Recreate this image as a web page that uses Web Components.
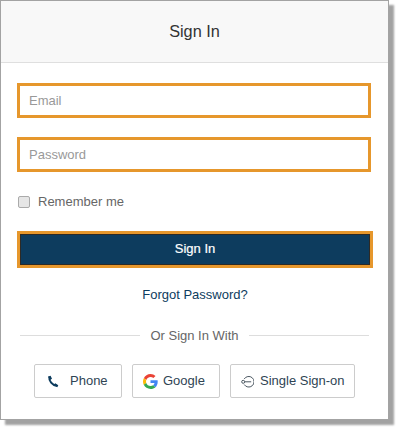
<!DOCTYPE html>
<html>
<head>
<meta charset="utf-8">
<title>Sign In</title>
<style>
  html, body { margin: 0; padding: 0; background: #fff; }
  body { font-family: "Liberation Sans", Arial, sans-serif; width: 400px; height: 431px; overflow: hidden; }
</style>
</head>
<body>
<login-card>
  <span slot="title">Sign In</span>
  <text-field label="Email"></text-field>
  <text-field label="Password" style="margin-top:19px"></text-field>
  <remember-check>Remember me</remember-check>
  <submit-button>Sign In</submit-button>
  <forgot-link>Forgot Password?</forgot-link>
  <or-divider>Or Sign In With</or-divider>
  <provider-row>
    <provider-button style="width:88px;padding-left:12px" gap="11">
      <svg slot="icon" width="12" height="13" viewBox="0 0 12 13" fill="none"><path d="M2.300 1.800C1.900 6 5 10.300 10 11" stroke="#0d3c5e" stroke-width="2"/><path d="M1 1.600 3.600 .8 5 3.800 3 5zM6.800 9.500 8.300 8.200 11.300 10.200 10.300 12.300z" fill="#0d3c5e"/></svg>
      Phone
    </provider-button>
    <provider-button style="width:88px;padding-left:10px" gap="5">
      <svg slot="icon" width="15" height="15" viewBox="0 0 48 48"><path fill="#EA4335" d="M24 9.500c3.500 0 6.700 1.200 9.200 3.600l6.900-6.900C35.900 2.400 30.500 0 24 0 14.600 0 6.500 5.400 2.600 13.200l8 6.200C12.400 13.700 17.700 9.500 24 9.500z"/><path fill="#4285F4" d="M47 24.500c0-1.600-.1-3.100-.4-4.500H24v9h12.900c-.6 3-2.200 5.400-4.700 7.100l7.700 6c4.500-4.200 7.100-10.300 7.100-17.600z"/><path fill="#FBBC05" d="M10.500 28.600c-.5-1.400-.8-3-.8-4.600s.3-3.200.8-4.600l-8-6.200C.9 16.500 0 20.100 0 24s.9 7.500 2.600 10.800l7.900-6.200z"/><path fill="#34A853" d="M24 48c6.500 0 11.900-2.100 15.900-5.900l-7.700-6c-2.100 1.400-4.900 2.300-8.200 2.300-6.300 0-11.600-4.200-13.500-9.900l-8 6.200C6.500 42.600 14.600 48 24 48z"/></svg>
      Google
    </provider-button>
    <provider-button style="width:125px;padding-left:10px" gap="6">
      <svg slot="icon" width="13" height="13" viewBox="0 0 13 13" fill="none" stroke="#4c5862" stroke-width="1"><path d="M3.200 4a5.300 5.300 0 1 1 0 5.500"/><circle cx="2.200" cy="6.800" r="1.500"/><path d="M3.700 6.800h6.500"/></svg>
      Single Sign-on
    </provider-button>
  </provider-row>
</login-card>
<script>
class LoginCard extends HTMLElement {
  constructor() {
    super();
    this.attachShadow({ mode: 'open' }).innerHTML = `
      <style>
        :host { display: block; box-sizing: border-box; width: 389px; height: 420px; margin: 0; background: #fff;
          border: 1px solid #a3a3a3; box-shadow: 5px 5px 2px 0 #a2a2a2; }
        .head { height: 62px; box-sizing: border-box; background: #f8f8f8; border-bottom: 1px solid #dfdfdf;
          display: flex; align-items: center; justify-content: center; font-size: 16.3px; color: #333; }
        .body { padding: 20px 16px 0; }
      </style>
      <div class="head"><slot name="title"></slot></div>
      <div class="body"><slot></slot></div>`;
  }
}
class TextField extends HTMLElement {
  constructor() {
    super();
    this.attachShadow({ mode: 'open' }).innerHTML = `
      <style>
        :host { display: block; box-sizing: border-box; width: 354px; height: 35px; border: 3px solid #e6972c;
          background: #fff; font-size: 13px; color: #999; line-height: 30px; padding-left: 9px; }
      </style>
      <span></span>`;
    this.shadowRoot.querySelector('span').textContent = this.getAttribute('label');
  }
}
class RememberCheck extends HTMLElement {
  constructor() {
    super();
    this.attachShadow({ mode: 'open' }).innerHTML = `
      <style>
        :host { display: flex; align-items: center; gap: 8px; height: 20px; margin: 20px 0 0 1px;
          font-size: 13px; color: #666; }
        i { width: 12px; height: 12px; box-sizing: border-box; border: 1px solid #aaa; border-radius: 2px;
          background: #e6e6e6; }
        span { padding-bottom: 2px; }
      </style>
      <i></i><span><slot></slot></span>`;
  }
}
class SubmitButton extends HTMLElement {
  constructor() {
    super();
    this.attachShadow({ mode: 'open' }).innerHTML = `
      <style>
        :host { display: flex; align-items: center; justify-content: center; box-sizing: border-box;
          width: 356px; height: 37px; margin-top: 19px; padding-bottom: 2px; background: #0d3c5e; color: #fff; font-size: 13px;
          -webkit-text-stroke: .2px #fff; box-shadow: inset 0 0 0 3px #e6972c, inset 0 0 0 4px #2e2a25; }
      </style>
      <slot></slot>`;
  }
}
class ForgotLink extends HTMLElement {
  constructor() {
    super();
    this.attachShadow({ mode: 'open' }).innerHTML = `
      <style>
        :host { display: block; text-align: center; margin-top: 18px; width: 356px; line-height: 18px;
          font-size: 13px; color: #0d3c5e; }
      </style>
      <slot></slot>`;
  }
}
class OrDivider extends HTMLElement {
  constructor() {
    super();
    this.attachShadow({ mode: 'open' }).innerHTML = `
      <style>
        :host { display: flex; align-items: center; gap: 10px; margin: 22px 0 0 3px; width: 349px; height: 18px;
          font-size: 13px; color: #666; }
        b { flex: 1; height: 1px; background: #ddd; }
      </style>
      <b></b><slot></slot><b></b>`;
  }
}
class ProviderRow extends HTMLElement {
  constructor() {
    super();
    this.attachShadow({ mode: 'open' }).innerHTML = `
      <style>
        :host { display: flex; gap: 10px; margin: 20px 0 0 17px; }
      </style>
      <slot></slot>`;
  }
}
class ProviderButton extends HTMLElement {
  constructor() {
    super();
    this.attachShadow({ mode: 'open' }).innerHTML = `
      <style>
        :host { display: flex; align-items: center; box-sizing: border-box; height: 34px;
          border: 1px solid #ccc; border-radius: 2px; background: #fff; font-size: 13px; color: #2f4454; }
        .icon { display: flex; margin-right: var(--gap, 5px); }
        .label { padding-bottom: 2px; }
      </style>
      <span class="icon"><slot name="icon"></slot></span><span class="label"><slot></slot></span>`;
    this.style.setProperty('--gap', (this.getAttribute('gap') || 5) + 'px');
  }
}
customElements.define('login-card', LoginCard);
customElements.define('text-field', TextField);
customElements.define('remember-check', RememberCheck);
customElements.define('submit-button', SubmitButton);
customElements.define('forgot-link', ForgotLink);
customElements.define('or-divider', OrDivider);
customElements.define('provider-row', ProviderRow);
customElements.define('provider-button', ProviderButton);
</script>
</body>
</html>
